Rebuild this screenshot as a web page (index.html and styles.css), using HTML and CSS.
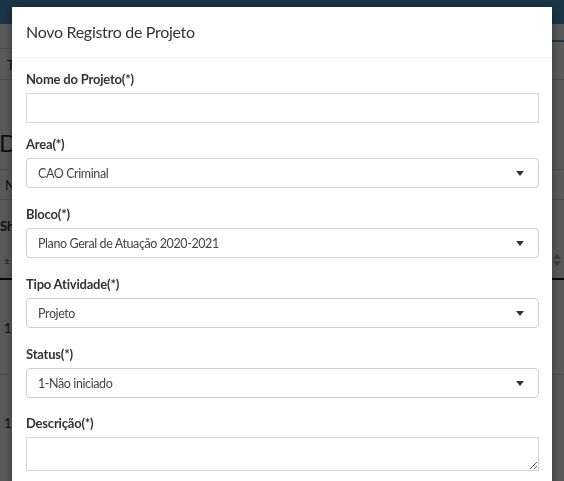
FILE: index.html
```html
<!DOCTYPE html>
<html lang="pt-BR">
<head>
<meta charset="utf-8">
<title>Novo Registro de Projeto</title>
<link rel="stylesheet" href="styles.css">
</head>
<body>
<div class="page">
  <div class="topbar"></div>
  <div class="tabs">
    <div class="tabs-left"><span class="tab">Tarefas</span></div>
    <div class="tabs-right"></div>
  </div>
  <div class="title-row"><h3 class="page-title">Dashboard</h3></div>
  <div class="nav-row"><span class="nav-item">Nome</span></div>
  <div class="show-row"><span>Show</span></div>
  <div class="thead"><span class="th">±</span><span class="sort"><span class="sort-up"></span><span class="sort-down"></span></span></div>
  <div class="trow"><span>14</span></div>
  <div class="trow last"><span>17</span></div>
</div>
<div class="backdrop"></div>
<div class="modal">
  <div class="modal-dialog">
    <div class="modal-content">
      <div class="modal-header">
        <h4 class="modal-title">Novo Registro de Projeto</h4>
      </div>
      <div class="modal-body">
        <div class="form-group first">
          <label class="form-label">Nome do Projeto(*)</label>
          <input class="form-control" type="text">
        </div>
        <div class="form-group">
          <label class="form-label">Area(*)</label>
          <div class="select"><span>CAO Criminal</span><span class="caret"></span></div>
        </div>
        <div class="form-group">
          <label class="form-label">Bloco(*)</label>
          <div class="select"><span>Plano Geral de Atuação 2020-2021</span><span class="caret"></span></div>
        </div>
        <div class="form-group">
          <label class="form-label">Tipo Atividade(*)</label>
          <div class="select"><span>Projeto</span><span class="caret"></span></div>
        </div>
        <div class="form-group tight">
          <label class="form-label">Status(*)</label>
          <div class="select"><span>1-Não iniciado</span><span class="caret"></span></div>
        </div>
        <div class="form-group">
          <label class="form-label">Descrição(*)</label>
          <textarea class="form-control textarea"></textarea>
        </div>
      </div>
    </div>
  </div>
</div>
</body>
</html>
```
FILE: styles.css
```css
html, body {
  margin: 0;
  padding: 0;
  height: 100%;
  overflow: hidden;
}
body {
  font-family: Lato, "Liberation Sans", sans-serif;
  color: #333;
  background: #fff;
}

/* background page */
.page {
  font-size: 13px;
}
.topbar {
  height: 24px;
  background: #4d95c8;
}
.tabs {
  display: flex;
  height: 56px;
  border-bottom: 1px solid #ddd;
  box-sizing: border-box;
}
.tabs-left {
  width: 50%;
  margin-top: 24px;
  border-top: 1px solid #ddd;
  padding-left: 7px;
  line-height: 33px;
}
.tabs-right {
  flex: 1;
  margin-top: 16px;
  border-top: 2px solid #4d95c8;
}
.title-row {
  height: 90px;
  box-sizing: border-box;
  padding-top: 48px;
  border-bottom: 1px solid #ddd;
}
.page-title {
  margin: 0 0 0 -1px;
  font-size: 24px;
  line-height: 30px;
  font-weight: 400;
}
.nav-row {
  height: 30px;
  box-sizing: border-box;
  border-bottom: 1px solid #ddd;
  padding-left: 5px;
  line-height: 30px;
}
.show-row {
  height: 50px;
  padding: 18px 0 0 0;
  box-sizing: border-box;
  font-weight: 700;
}
.thead {
  display: flex;
  justify-content: space-between;
  align-items: center;
  height: 30px;
  box-sizing: border-box;
  border-bottom: 2px solid #111;
  padding: 0 3px 8px 4px;
  font-size: 10px;
}
.sort {
  display: flex;
  flex-direction: column;
  gap: 2px;
}
.sort-up, .sort-down {
  width: 0;
  height: 0;
  border-style: solid;
}
.sort-up {
  border-width: 0 4px 5px;
  border-color: transparent transparent #aaa;
}
.sort-down {
  border-width: 5px 4px 0;
  border-color: #aaa transparent transparent;
}
.trow {
  height: 95px;
  box-sizing: border-box;
  border-bottom: 1px solid #ddd;
  padding: 40px 0 0 4px;
}
.trow.last {
  border-bottom: 0;
}

.backdrop {
  position: fixed;
  inset: 0;
  background: rgba(0, 0, 0, 0.65);
}

/* modal */
.modal {
  position: fixed;
  inset: 0;
  overflow: hidden;
}
.modal-dialog {
  width: 540px;
  margin: 7px auto 0;
}
.modal-content {
  background: #fff;
  box-shadow: 0 3px 9px rgba(0, 0, 0, 0.4);
}
.modal-header {
  padding: 12px 14px 13px;
  border-bottom: 1px solid #f0f0f0;
}
.modal-title {
  margin: 0;
  font-size: 16px;
  letter-spacing: -0.3px;
  line-height: 25px;
  font-weight: 400;
  color: #333;
}
.modal-body {
  padding: 12px 13px 20px 14px;
}
.form-group {
  margin-bottom: 17px;
}
.form-group.first {
  margin-bottom: 12px;
}
.form-group.tight {
  margin-bottom: 16px;
}
.form-label {
  display: block;
  font-size: 13px;
  letter-spacing: -0.2px;
  line-height: 18px;
  font-weight: 700;
  color: #333;
  margin-bottom: 5px;
}
.form-control {
  display: block;
  box-sizing: border-box;
  width: 100%;
  height: 30px;
  border: 1px solid #d2d6de;
  border-radius: 0;
  background: #fff;
  margin: 0;
  font: inherit;
}
.textarea {
  height: 34px;
  resize: vertical;
}
.select {
  display: flex;
  align-items: center;
  justify-content: space-between;
  height: 30px;
  box-sizing: border-box;
  border: 1px solid #ccc;
  border-radius: 4px;
  padding: 0 14px 0 11px;
  font-size: 12.5px;
  letter-spacing: -0.4px;
  color: #444;
  background: #fff;
}
.caret {
  width: 0;
  height: 0;
  border-style: solid;
  border-width: 5px 4px 0 4px;
  border-color: #333 transparent transparent transparent;
}
```
